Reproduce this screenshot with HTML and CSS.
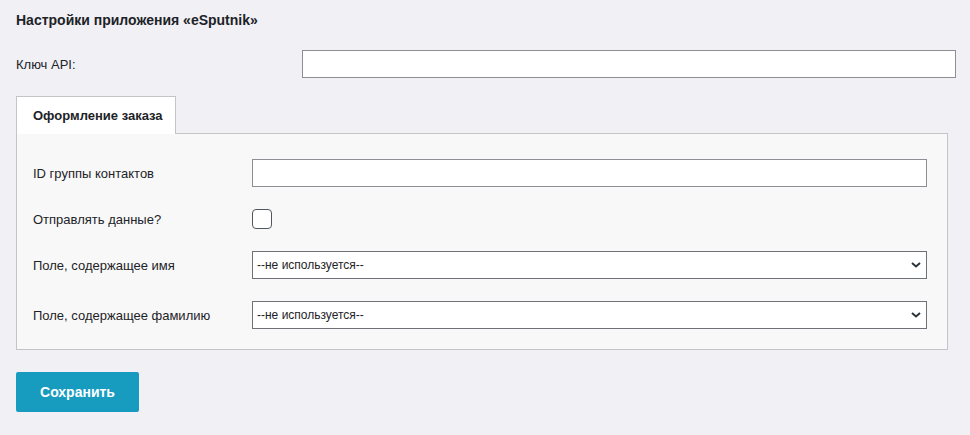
FILE: index.html
```html
<!DOCTYPE html>
<html lang="ru">
<head>
  <meta charset="UTF-8">
  <meta name="viewport" content="width=device-width, initial-scale=1.0">
  <title>Настройки приложения «eSputnik»</title>
  <link rel="stylesheet" href="styles.css">
</head>
<body>
  <main class="settings">
    <h2 class="settings-title">Настройки приложения «eSputnik»</h2>

    <div class="key-row">
      <label class="key-label" for="apiKey">Ключ API:</label>
      <input type="text" id="apiKey" class="text-input key-input">
    </div>

    <div class="tabs">
      <div class="tab active">Оформление заказа</div>
    </div>

    <div class="tab-panel">
      <div class="field-row">
        <label class="field-label" for="groupId">ID группы контактов</label>
        <input type="text" id="groupId" class="text-input">
      </div>
      <div class="field-row">
        <label class="field-label" for="sendData">Отправлять данные?</label>
        <input type="checkbox" id="sendData" class="check">
      </div>
      <div class="field-row">
        <label class="field-label" for="firstName">Поле, содержащее имя</label>
        <div class="select-wrap">
          <select id="firstName" class="select">
            <option>--не используется--</option>
          </select>
          <svg class="chevron" width="10" height="6" viewBox="0 0 10 6"><path d="M1 1l4 3.5L9 1" fill="none" stroke="#2c3338" stroke-width="2"/></svg>
        </div>
      </div>
      <div class="field-row">
        <label class="field-label" for="lastName">Поле, содержащее фамилию</label>
        <div class="select-wrap">
          <select id="lastName" class="select">
            <option>--не используется--</option>
          </select>
          <svg class="chevron" width="10" height="6" viewBox="0 0 10 6"><path d="M1 1l4 3.5L9 1" fill="none" stroke="#2c3338" stroke-width="2"/></svg>
        </div>
      </div>
    </div>

    <button class="save-btn">Сохранить</button>
  </main>
</body>
</html>
```

FILE: styles.css
```css
body {
  background-color: #f0f0f5;
  color: #1d2327;
  font-family: "Liberation Sans", Arial, sans-serif;
  font-size: 13px;
  margin: 0;
  padding: 0;
}
.settings {
  padding: 10px 14px 0 16px;
}
.settings-title {
  font-size: 14px;
  line-height: 20px;
  font-weight: bold;
  margin: 0 0 20px;
}
.key-row {
  display: flex;
  align-items: center;
  margin-bottom: 18px;
}
.key-label {
  width: 286px;
}
.text-input {
  box-sizing: border-box;
  height: 28px;
  border: 1px solid #8c8f94;
  border-radius: 0;
  background: #fff;
  margin: 0;
  padding: 0 6px;
  font: inherit;
}
.key-input {
  width: 655px;
}
.tabs {
  display: flex;
}
.tab {
  box-sizing: border-box;
  width: 160px;
  height: 38px;
  padding-left: 16px;
  line-height: 38px;
  font-weight: bold;
  background: #fff;
  border: 1px solid #c3c4c7;
  border-bottom: none;
  margin-bottom: -1px;
  position: relative;
}
.tab-panel {
  box-sizing: border-box;
  width: 932px;
  background-color: #f8f8f8;
  border: 1px solid #c3c4c7;
  padding: 25px 20px 20px 16px;
  display: flex;
  flex-direction: column;
  gap: 22px;
}
.field-row {
  display: flex;
  align-items: center;
}
.field-label {
  width: 219px;
  flex-shrink: 0;
}
.field-row .text-input,
.select-wrap {
  flex: 1;
}
.check {
  appearance: none;
  box-sizing: border-box;
  width: 20px;
  height: 20px;
  margin: 0;
  border: 1px solid #50575e;
  border-radius: 4px;
  background: #fff;
}
.select-wrap {
  position: relative;
}
.select {
  appearance: none;
  box-sizing: border-box;
  width: 100%;
  height: 28px;
  margin: 0;
  padding: 0 24px 0 4px;
  border: 1px solid #6e7175;
  border-radius: 0;
  background: #fff;
  color: #1d2327;
  font: inherit;
  font-size: 12px;
}
.chevron {
  position: absolute;
  right: 6px;
  top: 11px;
  pointer-events: none;
}
.save-btn {
  margin-top: 22px;
  width: 123px;
  height: 40px;
  background-color: #179cbf;
  color: #fff;
  border: none;
  border-radius: 2px;
  font-family: inherit;
  font-size: 14px;
  font-weight: bold;
  cursor: pointer;
}
```
